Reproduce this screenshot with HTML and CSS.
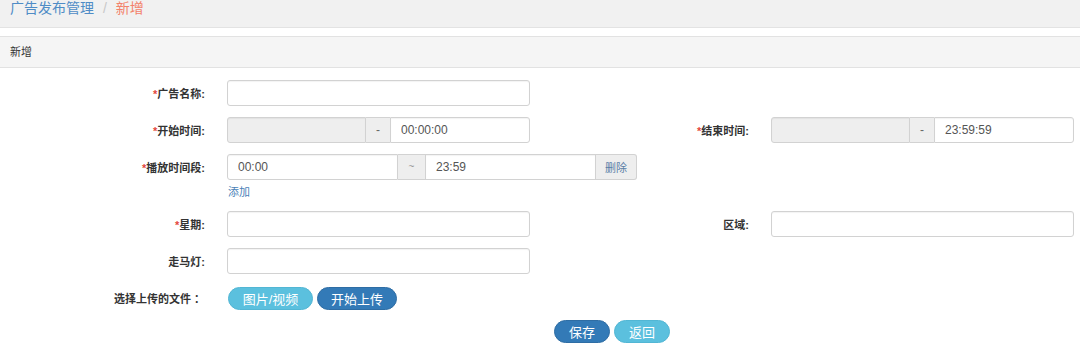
FILE: index.html
```html
<!DOCTYPE html>
<html lang="zh-CN">
<head>
    <meta charset="UTF-8">
    <meta name="viewport" content="width=device-width, initial-scale=1.0">
    <title>新增广告</title>
    <link rel="stylesheet" href="styles.css">
</head>
<body>
    <div class="breadcrumb">
        <a class="crumb-link" href="#">广告发布管理</a>
        <span class="crumb-sep">/</span>
        <span class="crumb-active">新增</span>
    </div>

    <div class="panel">
        <div class="panel-heading">新增</div>
        <div class="panel-body">
            <div class="form-row">
                <label class="form-label"><span class="req">*</span>广告名称:</label>
                <input type="text" class="form-control">
            </div>

            <div class="form-row">
                <label class="form-label"><span class="req">*</span>开始时间:</label>
                <div class="input-group">
                    <input type="text" class="form-control date" disabled>
                    <span class="addon">-</span>
                    <input type="text" class="form-control time" value="00:00:00">
                </div>
                <label class="form-label"><span class="req">*</span>结束时间:</label>
                <div class="input-group">
                    <input type="text" class="form-control date" disabled>
                    <span class="addon">-</span>
                    <input type="text" class="form-control time" value="23:59:59">
                </div>
            </div>

            <div class="form-row">
                <label class="form-label"><span class="req">*</span>播放时间段:</label>
                <div class="input-group period">
                    <input type="text" class="form-control" value="00:00">
                    <span class="addon wide">~</span>
                    <input type="text" class="form-control" value="23:59">
                    <button class="addon-btn">删除</button>
                </div>
            </div>

            <div class="form-row add-row">
                <span></span>
                <a class="add-link" href="#">添加</a>
            </div>

            <div class="form-row">
                <label class="form-label"><span class="req">*</span>星期:</label>
                <input type="text" class="form-control">
                <label class="form-label">区域:</label>
                <input type="text" class="form-control">
            </div>

            <div class="form-row">
                <label class="form-label">走马灯:</label>
                <input type="text" class="form-control">
            </div>

            <div class="form-row">
                <label class="form-label">选择上传的文件 ：</label>
                <div class="btn-row">
                    <button class="btn btn-info">图片/视频</button>
                    <button class="btn btn-primary wide">开始上传</button>
                </div>
            </div>

            <div class="form-row actions">
                <span></span>
                <span></span>
                <div class="btn-row">
                    <button class="btn btn-primary small">保存</button>
                    <button class="btn btn-info small">返回</button>
                </div>
            </div>
        </div>
    </div>
</body>
</html>
```

FILE: styles.css
```css
body {
    margin: 0;
    background-color: #fff;
    font-family: "Liberation Sans", "Noto Sans CJK SC", sans-serif;
    font-size: 12px;
    color: #333;
}
.breadcrumb {
    height: 27px;
    padding: 0 10px;
    background-color: #f1f1f1;
    border-bottom: 1px solid #e3e3e3;
    font-size: 14px;
    line-height: 16px;
}
.crumb-link {
    color: #4f8cc6;
    text-decoration: none;
}
.crumb-sep {
    color: #c8c8c8;
    margin: 0 5px;
}
.crumb-active {
    color: #f3826b;
}
.panel {
    margin-top: 8px;
}
.panel-heading {
    height: 30px;
    line-height: 30px;
    padding: 0 10px;
    background-color: #f5f5f5;
    border-top: 1px solid #e2e2e2;
    border-bottom: 1px solid #e2e2e2;
    font-size: 11px;
    color: #333;
}
.panel-body {
    padding-top: 12px;
}
.form-row {
    display: grid;
    grid-template-columns: 205px 303px 197px 303px;
    column-gap: 22px;
    align-items: center;
    height: 26px;
    margin-bottom: 11px;
}
.form-label {
    text-align: right;
    font-weight: bold;
    font-size: 11px;
    color: #333;
}
.req {
    color: #e4473b;
}
.form-control {
    box-sizing: border-box;
    width: 100%;
    height: 26px;
    padding: 0 10px;
    border: 1px solid #d2d2d2;
    border-radius: 3px;
    box-shadow: inset 0 1px 1px rgba(0, 0, 0, 0.05);
    background-color: #fff;
    font-family: "Liberation Sans", "Noto Sans CJK SC", sans-serif;
    font-size: 12px;
    color: #555;
    outline: none;
}
.form-control:disabled {
    background-color: #eee;
}
.input-group {
    display: flex;
    width: 303px;
    height: 26px;
}
.input-group .form-control {
    border-radius: 0;
}
.input-group .form-control:first-child {
    border-radius: 3px 0 0 3px;
}
.input-group .form-control:last-child {
    border-radius: 0 3px 3px 0;
}
.input-group .date {
    width: 139px;
    flex: none;
}
.input-group .time {
    flex: 1;
}
.addon {
    box-sizing: border-box;
    flex: none;
    width: 24px;
    height: 26px;
    line-height: 24px;
    text-align: center;
    background-color: #eee;
    border: 1px solid #d2d2d2;
    border-left: none;
    border-right: none;
    color: #666;
    font-size: 12px;
}
.addon.wide {
    width: 27px;
    font-size: 10px;
    color: #999;
}
.period {
    grid-column: 2 / 4;
    width: 411px;
}
.period .form-control {
    width: 171px;
    flex: none;
}
.addon-btn {
    box-sizing: border-box;
    width: 41px;
    height: 26px;
    padding: 0;
    background-color: #eee;
    border: 1px solid #d2d2d2;
    border-left: none;
    border-radius: 0 3px 3px 0;
    color: #5a7ea6;
    font-family: "Liberation Sans", "Noto Sans CJK SC", sans-serif;
    font-size: 11px;
    cursor: pointer;
}
.add-row {
    height: 14px;
    margin-top: -6px;
    margin-bottom: 12px;
}
.add-link {
    padding-left: 1px;
    color: #4a7fb7;
    font-size: 11px;
    line-height: 14px;
    text-decoration: none;
}
.btn-row {
    display: flex;
    gap: 4px;
    padding-left: 1px;
}
.btn {
    box-sizing: border-box;
    width: 85px;
    height: 23px;
    padding: 0;
    border: 1px solid transparent;
    border-radius: 12px;
    color: #fff;
    font-family: "Liberation Sans", "Noto Sans CJK SC", sans-serif;
    font-size: 13px;
    cursor: pointer;
}
.btn.wide {
    width: 80px;
}
.btn.small {
    width: 56px;
}
.btn-info {
    background-color: #5bc0de;
    border-color: #52b6d4;
}
.btn-primary {
    background-color: #337ab7;
    border-color: #2e6da4;
}
.actions {
    height: 23px;
    margin-top: -2px;
    margin-bottom: 0;
}
.actions .btn-row {
    padding-left: 2px;
}
```
